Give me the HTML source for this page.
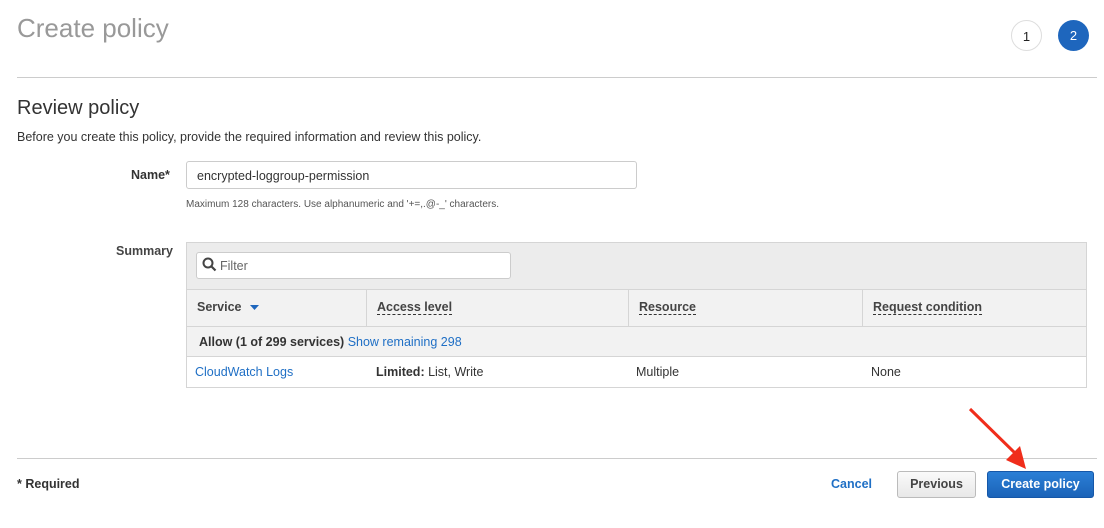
<!DOCTYPE html>
<html><head><meta charset="utf-8"><style>
*{box-sizing:border-box;margin:0;padding:0}
body{width:1104px;height:528px;background:#fff;font-family:"Liberation Sans",Arial,sans-serif;color:#444;position:relative;overflow:hidden;font-size:12px}
.a{position:absolute;white-space:nowrap}
.c{position:absolute;width:31px;height:31px;border-radius:50%;text-align:center;line-height:31px;font-size:13px}
.th{position:absolute;top:290px;height:37px;border-right:1px solid #d5d5d5;padding:10px 10px;font-weight:bold;font-size:12.5px;color:#444}
.th span{border-bottom:1px dashed #333}
</style></head><body>
<div class="a" style="left:17px;top:13px;font-size:26px;color:#999">Create policy</div>
<div class="c" style="left:1011px;top:20px;border:1px solid #ddd;color:#222">1</div>
<div class="c" style="left:1058px;top:20px;background:#1e66bd;color:#fff">2</div>
<div class="a" style="left:17px;top:77px;width:1080px;height:1px;background:#ccc"></div>
<div class="a" style="left:17px;top:97px;font-size:20px;color:#333">Review policy</div>
<div class="a" style="left:17px;top:130px;font-size:12.5px;color:#333">Before you create this policy, provide the required information and review this policy.</div>
<div class="a" style="left:131px;top:168px;font-size:12.5px;font-weight:bold;color:#333">Name*</div>
<div class="a" style="left:186px;top:161px;width:451px;height:28px;border:1px solid #ccc;border-radius:3px;padding:7px 10px;font-size:12.5px;color:#333">encrypted-loggroup-permission</div>
<div class="a" style="left:186px;top:199px;font-size:10px;color:#555">Maximum 128 characters. Use alphanumeric and '+=,.@-_' characters.</div>
<div class="a" style="left:116px;top:244px;font-size:12.5px;font-weight:bold;color:#444">Summary</div>
<div class="a" style="left:186px;top:242px;width:901px;height:146px;border:1px solid #d5d5d5;border-bottom:none"></div>
<div class="a" style="left:187px;top:243px;width:899px;height:47px;background:#ececec;border-bottom:1px solid #d5d5d5"></div>
<div class="a" style="left:196px;top:252px;width:315px;height:27px;background:#fff;border:1px solid #ccc;border-radius:3px;padding:6px 0 0 23px;font-size:12.5px;color:#666">Filter</div>
<svg class="a" style="left:202px;top:257px" width="15" height="15" viewBox="0 0 15 15"><circle cx="6" cy="6" r="4.5" fill="none" stroke="#444" stroke-width="2"/><path d="M9.5 9.5l4 4" stroke="#444" stroke-width="2.2"/></svg>
<div class="a" style="left:187px;top:290px;width:899px;height:37px;background:#f2f2f2;border-bottom:1px solid #d5d5d5"></div>
<div class="th" style="left:187px;width:180px">Service <svg width="12" height="8" style="margin-left:4px"><path d="M1 2h9l-4.5 5z" fill="#1e66bd"/></svg></div>
<div class="th" style="left:367px;width:262px"><span>Access level</span></div>
<div class="th" style="left:629px;width:234px"><span>Resource</span></div>
<div class="th" style="left:863px;width:223px;border-right:none"><span>Request condition</span></div>
<div class="a" style="left:187px;top:327px;width:899px;height:30px;background:#f2f2f2;border-bottom:1px solid #d5d5d5"></div>
<div class="a" style="left:199px;top:335px;font-size:12.5px;color:#333"><b>Allow (1 of 299 services)</b> <span style="color:#1f6fc5">Show remaining 298</span></div>
<div class="a" style="left:186px;top:387px;width:901px;height:1px;background:#d5d5d5"></div>
<div class="a" style="left:195px;top:365px;font-size:12.5px;color:#1f6fc5">CloudWatch Logs</div>
<div class="a" style="left:376px;top:365px;font-size:12.5px;color:#333"><b>Limited:</b> List, Write</div>
<div class="a" style="left:636px;top:365px;font-size:12.5px;color:#333">Multiple</div>
<div class="a" style="left:871px;top:365px;font-size:12.5px;color:#333">None</div>
<div class="a" style="left:17px;top:458px;width:1080px;height:1px;background:#ccc"></div>
<div class="a" style="left:17px;top:477px;font-size:12.5px;font-weight:bold;color:#333">* Required</div>
<div class="a" style="left:831px;top:477px;font-size:12.5px;font-weight:bold;color:#1f6fc5">Cancel</div>
<div class="a" style="left:897px;top:471px;width:79px;height:27px;border:1px solid #bbb;border-radius:3px;background:linear-gradient(#fafafa,#e8e8e8);text-align:center;line-height:25px;font-size:12.5px;font-weight:bold;color:#444">Previous</div>
<div class="a" style="left:987px;top:471px;width:107px;height:27px;border:1px solid #1557a8;border-radius:3px;background:linear-gradient(#2b7fd6,#1b63b8);text-align:center;line-height:25px;font-size:12.5px;font-weight:bold;color:#fff">Create policy</div>
<svg class="a" style="left:960px;top:400px" width="80" height="75"><path d="M10 9L56 54" stroke="#f02d1b" stroke-width="3"/><path d="M66 69L46 60L60 46z" fill="#f02d1b"/></svg>
</body></html>
